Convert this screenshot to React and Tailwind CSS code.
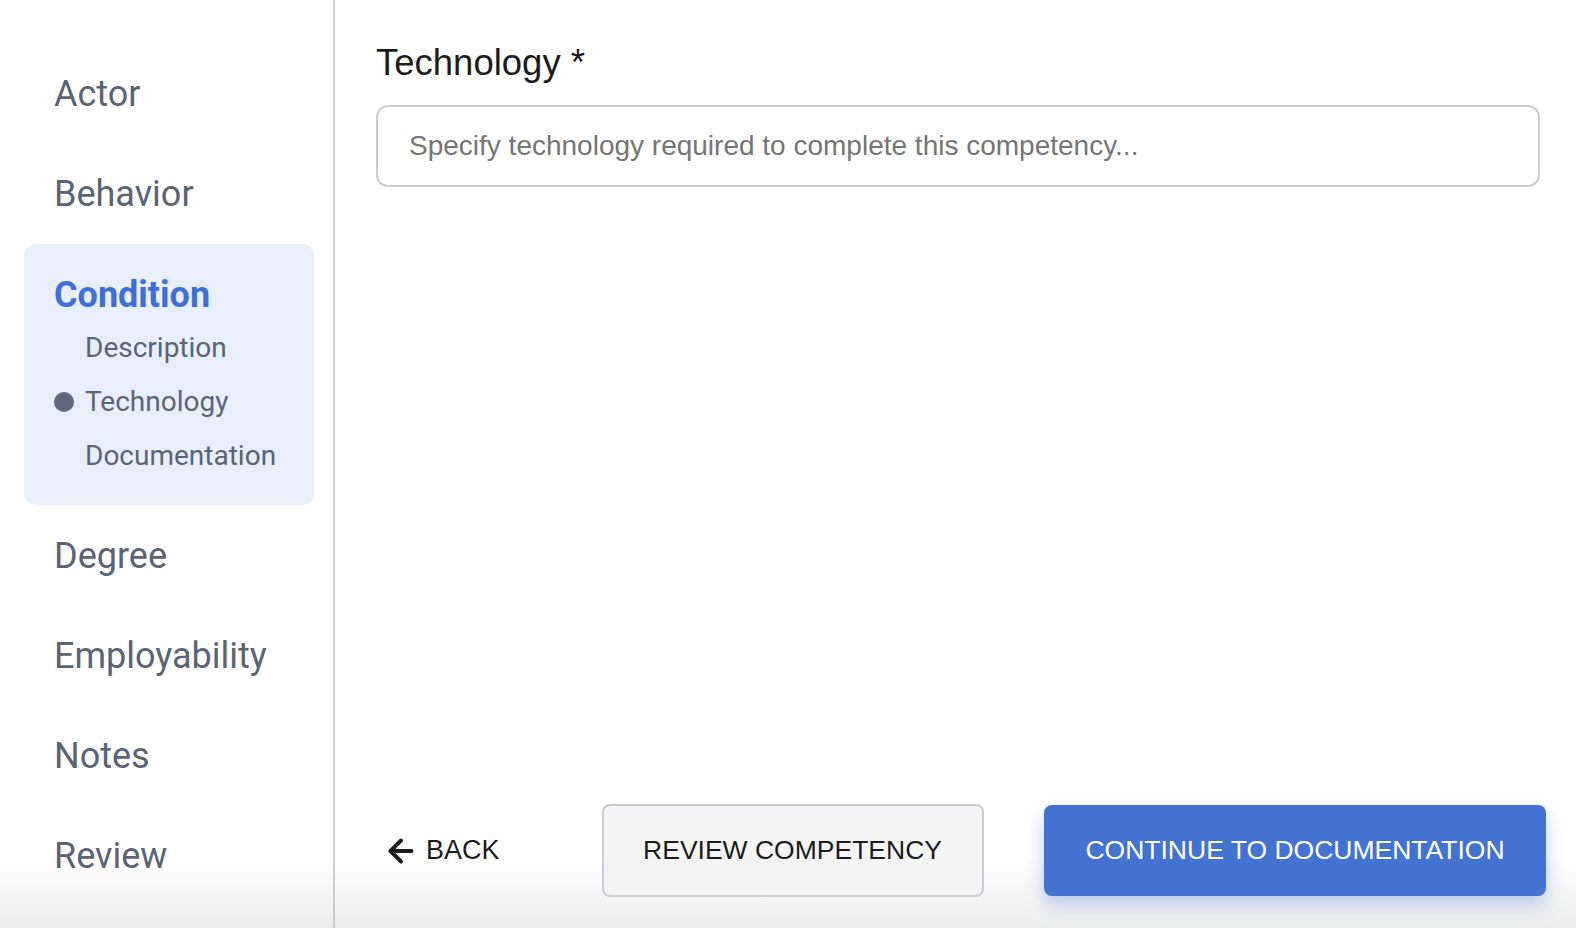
import { ArrowLeft } from 'lucide-react';

const topItems = ['Actor', 'Behavior'];
const bottomItems = ['Degree', 'Employability', 'Notes', 'Review'];
const subItems = ['Description', 'Technology', 'Documentation'];

export default function App() {
  return (
    <div className="flex h-[928px] w-full overflow-hidden bg-[linear-gradient(to_bottom,#ffffff_0px,#ffffff_858px,#ececec_928px)]">
      {/* Sidebar */}
      <aside className="w-[335px] shrink-0 border-r-2 border-[#c9ccd1] pt-[44px] font-['Roboto',sans-serif] text-[#5a6474]">
        {topItems.map(item => (
          <div key={item} className="flex h-[100px] items-center pl-[54px] text-[36px]">{item}</div>
        ))}

        <div className="ml-6 w-[290px] rounded-xl bg-[#e8effb] pb-[22px] pt-6">
          <div className="flex h-[53px] items-center pl-[30px] text-[36px] font-bold text-[#3f6fd6]">Condition</div>
          {subItems.map(item => (
            <div key={item} className="flex h-[54px] items-center pl-[30px] text-[28px]">
              <span className="flex w-[31px] items-center">
                {item === 'Technology' && <span className="h-5 w-5 rounded-full bg-[#5f6878]" />}
              </span>
              {item}
            </div>
          ))}
        </div>

        <div className="h-px" />
        {bottomItems.map(item => (
          <div key={item} className="flex h-[100px] items-center pl-[54px] text-[36px]">{item}</div>
        ))}
      </aside>

      {/* Main */}
      <main className="flex flex-1 flex-col justify-between pb-[31px] pl-[41px] pr-[30px] pt-[42px] font-['Liberation_Sans',Arial,sans-serif]">
        <div className="pr-[6px]">
          <label className="block h-[42px] text-[36.5px] leading-[42px] text-[#1c1c1e]">Technology *</label>
          <input
            className="mt-[21px] h-[82px] w-full rounded-xl border-2 border-[#c9ccd1] bg-white px-[31px] text-[28px] text-[#1c1c1e] outline-none placeholder:text-[#757575]"
            placeholder="Specify technology required to complete this competency..."
          />
        </div>

        <div className="flex items-center">
          <button className="ml-[7px] flex items-center gap-[7px] text-[27px] text-[#1c1c1e]">
            <ArrowLeft size={36} strokeWidth={2.6} />
            BACK
          </button>
          <button className="ml-[102px] h-[93px] w-[382px] rounded-lg border-2 border-[#c9ccd1] bg-[#f4f4f4] text-[26.5px] text-[#1c1c1e]">
            REVIEW COMPETENCY
          </button>
          <button className="ml-auto h-[91px] w-[502px] rounded-lg bg-[#4472d1] text-[26.5px] text-white shadow-[0_8px_18px_rgba(68,114,209,0.35)]">
            CONTINUE TO DOCUMENTATION
          </button>
        </div>
      </main>
    </div>
  );
}
